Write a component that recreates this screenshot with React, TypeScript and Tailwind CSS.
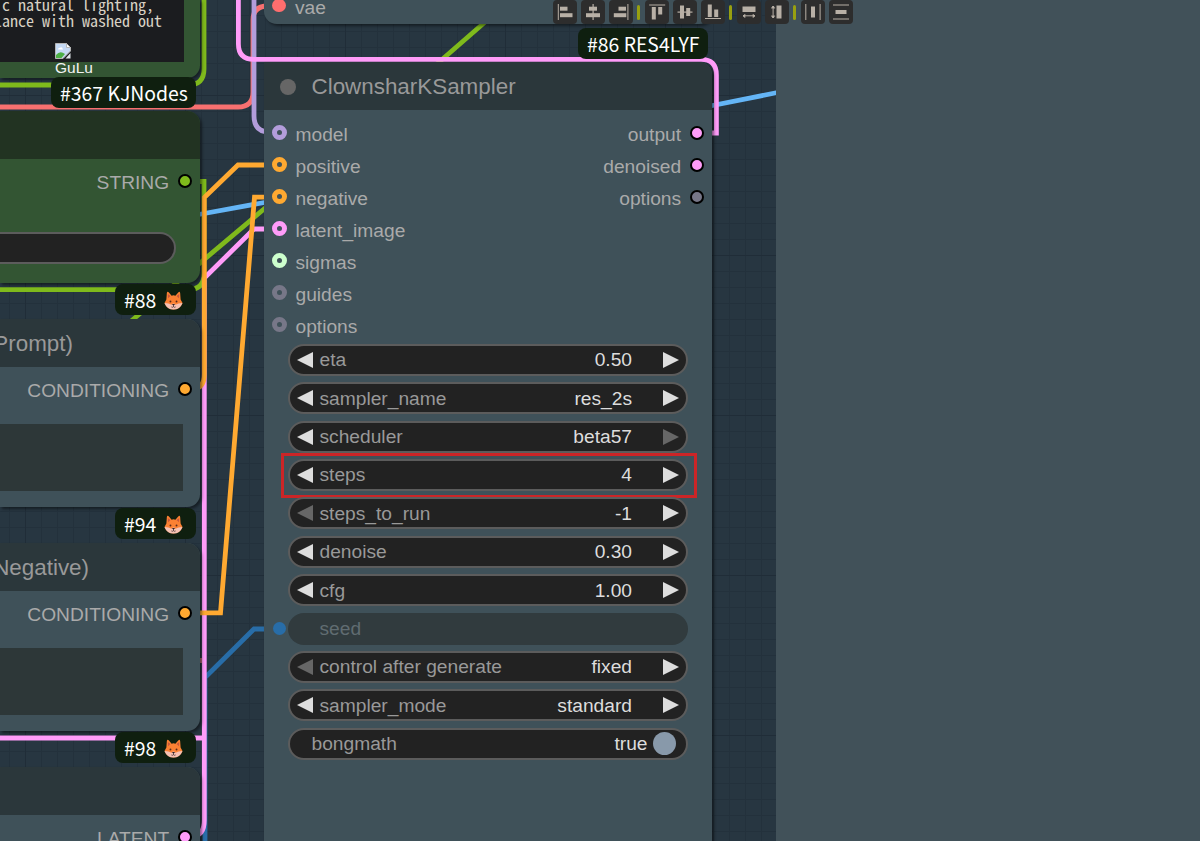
import type { ReactNode } from "react";
import clsx from "clsx";

const inputs = [
  { name: "model", color: "#b39ddb" },
  { name: "positive", color: "#ffa931" },
  { name: "negative", color: "#ffa931" },
  { name: "latent_image", color: "#ff9cf9" },
  { name: "sigmas", color: "#cdffcd" },
  { name: "guides", color: "#777788" },
  { name: "options", color: "#777788" },
];

const outputs = [
  { name: "output", color: "#ff9cf9" },
  { name: "denoised", color: "#ff9cf9" },
  { name: "options", color: "#777788" },
];

const widgets = [
  { name: "eta", value: "0.50" },
  { name: "sampler_name", value: "res_2s" },
  { name: "scheduler", value: "beta57", last: true },
  { name: "steps", value: "4", marked: true },
  { name: "steps_to_run", value: "-1", first: true },
  { name: "denoise", value: "0.30" },
  { name: "cfg", value: "1.00" },
  { name: "seed", linked: true },
  { name: "control after generate", value: "fixed", first: true },
  { name: "sampler_mode", value: "standard" },
];

// Each icon is a list of [x, y, w, h] bars on a 24x24 grid
const tools: (number[][] | "sep")[] = [
  [[4.8, 4, 1, 16], [7, 6.7, 7.5, 4], [7, 13.2, 12.5, 4]],
  [[11.5, 4, 1.2, 16], [8, 6.7, 8, 4], [5, 13.2, 14, 4]],
  [[18.4, 4, 1, 16], [9.5, 6.7, 7.5, 4], [4.8, 13.2, 12.5, 4]],
  "sep",
  [[4.2, 4.5, 16, 1], [6.8, 7, 4, 12.5], [13.2, 7, 4, 7.5]],
  [[4.5, 11.5, 15, 1.2], [7, 5.5, 4, 13], [13.2, 8, 4, 8]],
  [[4, 18, 16, 1], [6.8, 4.5, 4, 12.5], [13.2, 9.5, 4, 7.5]],
  "sep",
  [[5.5, 6.5, 13, 5.5], [7, 15.3, 10, 1], [6, 15, 2, 1.8], [16, 15, 2, 1.8], [7.3, 14, 1, 3.8], [15.7, 14, 1, 3.8]],
  [[11.5, 5.5, 5, 13], [7.6, 7, 1, 10], [7.1, 6, 2, 2], [7.1, 16, 2, 2], [6.1, 7.4, 4, 1], [6.1, 15.6, 4, 1]],
  "sep",
  [[4.3, 4, 1, 16], [10, 6.5, 4, 11], [18.6, 4, 1, 16]],
  [[4, 4.5, 16, 1], [6.5, 10, 11, 4], [4, 18.5, 16, 1]],
];

function Toolbar() {
  return (
    <div className="absolute left-[552.5px] top-0 flex h-6 items-center gap-[4.15px]">
      {tools.map((tool, i) =>
        tool === "sep" ? (
          <div key={i} className="h-[15px] w-[3.5px] rounded-full bg-[#98a010]" />
        ) : (
          <div key={i} className="h-6 w-6 rounded-[4px] bg-[#2d2d2d]">
            <svg viewBox="0 0 24 24" className="h-6 w-6" fill="#b8b0a6">
              {tool.map(([x, y, w, h], j) => (
                <rect key={j} x={x} y={y} width={w} height={h} />
              ))}
            </svg>
          </div>
        )
      )}
    </div>
  );
}

function Dot({ color }: { color: string }) {
  return (
    <span
      className="h-[14.4px] w-[14.4px] shrink-0 rounded-full border-2 border-black"
      style={{ backgroundColor: color }}
    />
  );
}

function Arrow({ right, dim }: { right?: boolean; dim?: boolean }) {
  return (
    <svg viewBox="0 0 16 16" className="h-4 w-4 shrink-0" fill={dim ? "#666" : "#ddd"}>
      <path d={right ? "M0 0L16 8L0 16Z" : "M16 0L0 8L16 16Z"} />
    </svg>
  );
}

function Fox() {
  return (
    <svg viewBox="0 0 20 20" className="mt-[2px] h-[19px] w-[19px]">
      <path d="M2.5 9L3 2Q3.5 0 5.2 1.6L8 5Q10 4 12 5L15 1.6Q16.6 0 17 2L17.5 9L19.5 12.5Q17 19 10 19.5Q3 19 .5 12.5Z" fill="#fb8133" />
      <path d="M4 3.2L4.2 7.5L6.8 5.3ZM16 3.2L15.8 7.5L13.2 5.3Z" fill="#c8583c" />
      <path d="M.5 12.5Q5 12.5 8 14.5Q10 12 12 14.5Q15 12.5 19.5 12.5Q17 19.3 10 19.5Q3 19.3 .5 12.5Z" fill="#f6c2b4" />
      <circle cx="6.8" cy="11" r="1" fill="#5a2a1b" />
      <circle cx="13.2" cy="11" r="1" fill="#5a2a1b" />
      <path d="M8.3 13.6H11.7L10 15.5Z" fill="#2b2025" />
      <path d="M10 15V16.5M7.8 16.8Q9.2 17.6 10 16.5Q10.8 17.6 12.2 16.8" stroke="#3c292c" strokeWidth=".8" fill="none" />
    </svg>
  );
}

function Badge({ className, children }: { className: string; children: ReactNode }) {
  return (
    <div
      className={clsx(
        "absolute flex h-[31px] items-center gap-2 rounded-[8px] bg-[#0f1f0f] pl-[9px] font-['Noto_Sans_CJK_SC',sans-serif] text-[19.4px] leading-[31px] whitespace-nowrap text-white",
        className
      )}
    >
      {children}
    </div>
  );
}

function Output({ name, color }: { name: string; color: string }) {
  return (
    <div className="flex h-8 items-center justify-end gap-[8.5px]">
      <span className="pt-1">{name}</span>
      <Dot color={color} />
    </div>
  );
}

function SideNode({ className, title, output, color, green, children }: {
  className: string;
  title?: ReactNode;
  output: string;
  color: string;
  green?: boolean;
  children?: ReactNode;
}) {
  return (
    <div
      className={clsx(
        "absolute left-0 flex w-[200px] flex-col overflow-hidden rounded-r-[12.8px] shadow-[2px_2px_3px_rgba(0,0,0,0.45)]",
        green ? "bg-[#335533]" : "bg-[#3f5159]",
        className
      )}
    >
      <div
        className={clsx(
          "h-12 shrink-0 pt-px text-[22.4px] leading-[48px] text-[#999]",
          green ? "bg-[#223322]" : "bg-[#2b373b]"
        )}
      >
        {title}
      </div>
      <div className="pt-[6px] pr-2">
        <Output name={output} color={color} />
      </div>
      {children}
    </div>
  );
}

function Links() {
  return (
    <svg viewBox="0 0 1200 841" className="absolute inset-0 h-full w-full" fill="none" strokeWidth="4.8">
      <path d="M130 322L270 204M430 70L500 9" stroke="#7fba1c" />
      <path d="M0 85H188Q204 85 204 69V0" stroke="#7fba1c" />
      <path d="M200 181.5H204V274Q204 289.6 188 289.6H0" stroke="#7fba1c" />
      <path d="M196 215L270 201.5M700 108L780 92" stroke="#64b5f6" />
      <path d="M280 629H254L205 677.5V841" stroke="#286da8" />
      <path d="M0 107H238Q253 107 253 92V20Q253 6 268 6" stroke="#f87070" />
      <path d="M254 0V116Q254 132 270 132" stroke="#b39ddb" />
      <path d="M712 133H716.4V75Q716.4 59.4 701 59.4H254Q238.4 59.4 238.4 44V0" stroke="#ff9cf9" />
      <path d="M266 229H254L204.3 278V820Q204.3 836 192 836M0 738H204" stroke="#ff9cf9" />
      <path d="M200 660.5H202" stroke="#b06a73" />
      <path d="M266 197.2H254.5L220.5 612.8H198" stroke="#ffa931" />
      <path d="M266 165H238L204.3 197.5V374Q204.3 389 192 389" stroke="#ffa931" />
    </svg>
  );
}

function Sampler() {
  return (
    <div className="absolute top-[62.4px] left-[264px] h-[800px] w-[448px] rounded-tr-[12.8px] bg-[#3f5159] shadow-[2px_2px_3px_rgba(0,0,0,0.5)]">
      <div className="flex h-12 items-center gap-4 rounded-tr-[12.8px] bg-[#2b373b] pt-px pl-[15.5px] text-[22.4px] text-[#999]">
        <span className="h-4 w-4 rounded-full bg-[#666]" />
        <span className="pt-px">ClownsharKSampler</span>
      </div>

      {/* Slots */}
      <div className="flex justify-between pt-[6.6px] pr-2 pl-2">
        <div>
          {inputs.map((slot) => (
            <div key={slot.name} className="flex h-8 items-center gap-[8.5px]">
              <span
                className="h-[15px] w-[15px] rounded-full border-[5px]"
                style={{ borderColor: slot.color }}
              />
              <span className="pt-1">{slot.name}</span>
            </div>
          ))}
        </div>
        <div>
          {outputs.map((slot) => (
            <Output key={slot.name} {...slot} />
          ))}
        </div>
      </div>

      {/* Widgets */}
      <div className="mt-[2.8px] flex flex-col gap-[6.4px] pr-6 pl-[23.5px]">
        {widgets.map((w) => (
          <div
            key={w.name}
            className={clsx(
              "relative flex h-8 items-center rounded-full",
              w.linked
                ? "bg-[#313b3e] pl-8 text-[#606c71]"
                : "border-2 border-[#5c5c5c] bg-[#222] px-[7.5px] text-[#999]"
            )}
          >
            {w.linked ? (
              <>
                <span className="absolute -left-[15px] h-[13px] w-[13px] rounded-full bg-[#286da8]" />
                <span className="pt-px">{w.name}</span>
              </>
            ) : (
              <>
                <Arrow dim={w.first} />
                <span className="ml-[6.5px] flex-1 pt-px">{w.name}</span>
                <span className="mr-[30.5px] pt-px text-[#ddd]">{w.value}</span>
                <Arrow right dim={w.last} />
              </>
            )}
            {w.marked && (
              <span className="absolute -top-[8px] -left-[8.5px] h-[45px] w-[416px] border-[3px] border-[#cc2527]" />
            )}
          </div>
        ))}
        <div className="flex h-8 items-center gap-[5px] rounded-full border-2 border-[#5c5c5c] bg-[#222] pr-[10.5px] pl-[22px] text-[#999]">
          <span className="flex-1 pt-px">bongmath</span>
          <span className="pt-px text-[#ddd]">true</span>
          <span className="h-[23px] w-[23px] rounded-full bg-[#8899aa]" />
        </div>
      </div>
    </div>
  );
}

export default function App() {
  return (
    <div className="relative h-[841px] w-[1200px] overflow-hidden bg-[#273641] font-['Liberation_Sans',sans-serif] text-[19.2px] leading-8 text-[#aaa]">
      {/* Canvas grid, a minor line every 16px and a major one every 160px */}
      <div className="absolute inset-0 bg-[linear-gradient(#202d38_1px,transparent_1px),linear-gradient(90deg,#202d38_1px,transparent_1px),linear-gradient(#23313c_1px,transparent_1px),linear-gradient(90deg,#23313c_1px,transparent_1px)] bg-[size:160px_160px,160px_160px,16px_16px,16px_16px] bg-[position:25px_95px,25px_95px,9px_15px,9px_15px]" />
      <Links />

      {/* Text node, top left */}
      <div className="absolute top-0 left-0 h-[78px] w-[200px] rounded-br-[12.8px] bg-[#335533] shadow-[2px_2px_3px_rgba(0,0,0,0.45)]">
        <div className="flex h-[62px] w-[184px] flex-col overflow-hidden bg-[#1b1c1f]">
          <div className="-mt-[4px] flex w-[162px] flex-col items-end font-['Noto_Sans_Mono_CJK_SC','Liberation_Mono',monospace] text-[16px] leading-4 whitespace-pre text-[#d9d2c5]">
            <div>c natural lighting, </div>
            <div>lance with washed out</div>
          </div>
        </div>
      </div>
      <Badge className="top-[77px] left-[51px] w-[145px]">#367 KJNodes</Badge>
      <div className="absolute top-[43px] left-[55px] flex flex-col text-[15.5px] leading-[18px] text-[#f2f2f2]">
        <svg viewBox="0 0 16 16" className="h-4 w-4">
          <path d="M.5 .5H11.5L15.5 4.5V8L8 15.5H.5Z" fill="#c5d9f4" stroke="#b5b5b5" />
          <path d="M11.5 .5V4.5H15.5Z" fill="#fff" stroke="#b5b5b5" />
          <path d="M3 6.5Q3 4.5 5 4.7Q7 3.4 8 6.5Z" fill="#fff" />
          <path d="M1 15V12Q5 7 10 11L6.5 15Z" fill="#4caf46" />
          <path d="M15.5 10V15.5H10.5Z" fill="#e2e6ec" />
        </svg>
        <span>GuLu</span>
      </div>

      <SideNode className="top-[111px] h-[172px]" output="STRING" color="#7fba1c" green>
        <div className="mt-[35px] h-8 w-[176px] rounded-r-full border-2 border-l-0 border-[#5c5c5c] bg-[#222]" />
      </SideNode>
      <Badge className="top-[284px] left-[115px] w-[81px]">
        #88 <Fox />
      </Badge>

      <SideNode
        className="top-[319px] h-[188px]"
        title={<div className="flex w-[73px] justify-end">(Prompt)</div>}
        output="CONDITIONING"
        color="#ffa931"
      >
        <div className="mt-[19px] h-[67px] w-[183px] bg-[#2d3738]" />
      </SideNode>
      <Badge className="top-[508px] left-[115px] w-[81px]">
        #94 <Fox />
      </Badge>

      <SideNode
        className="top-[543px] h-[188px]"
        title={<div className="flex w-[89px] justify-end">(Negative)</div>}
        output="CONDITIONING"
        color="#ffa931"
      >
        <div className="mt-[19px] h-[67px] w-[183px] bg-[#2d3738]" />
      </SideNode>
      <Badge className="top-[732px] left-[115px] w-[81px]">
        #98 <Fox />
      </Badge>

      <SideNode className="top-[767px] h-[120px]" output="LATENT" color="#ff9cf9" />

      {/* Node above the sampler, only its last input is in view */}
      <div className="absolute top-0 left-[264px] flex h-6 w-[448px] items-end gap-[9px] rounded-b-[12.8px] bg-[#3f5159] pl-2 shadow-[2px_2px_3px_rgba(0,0,0,0.45)]">
        <span className="mb-[12px] h-[13px] w-[14px] rounded-full bg-[#ff6e6e]" />
        <span>vae</span>
      </div>

      <Sampler />
      <Badge className="top-[28px] left-[578px] w-[130px]">#86 RES4LYF</Badge>

      {/* Side panel */}
      <div className="absolute top-0 right-0 h-full w-[424px] bg-[#415159]" />
      <Toolbar />
    </div>
  );
}
